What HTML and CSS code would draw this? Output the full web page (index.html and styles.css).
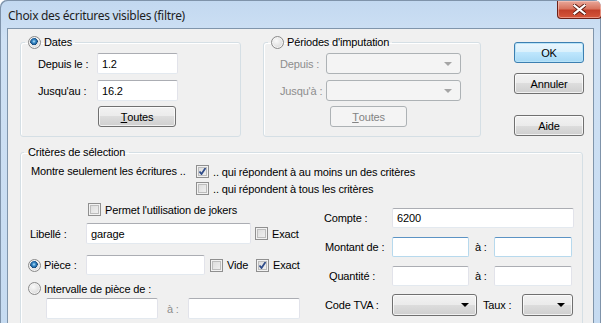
FILE: index.html
```html
<!DOCTYPE html>
<html lang="fr">
<head>
    <meta charset="UTF-8">
    <title>Choix des écritures visibles (filtre)</title>
    <link rel="stylesheet" href="styles.css">
</head>
<body>
    <div class="window">
        <div class="titlebar">
            <span class="title">Choix des écritures visibles (filtre)</span>
            <span class="close">
                <svg width="13" height="11" viewBox="0 0 13 11">
                    <path d="M1.5 1.5 L11.5 9.5 M11.5 1.5 L1.5 9.5" stroke="#5a1a10" stroke-width="4" stroke-linecap="square" fill="none"/>
                    <path d="M1.5 1.5 L11.5 9.5 M11.5 1.5 L1.5 9.5" stroke="#fff" stroke-width="2.2" stroke-linecap="square" fill="none"/>
                </svg>
            </span>
        </div>
        <div class="client">
            <div class="top-row">
                <fieldset class="group dates">
                    <legend><span class="radio on"></span>Dates</legend>
                    <div class="inner">
                        <div class="row">
                            <span class="lbl w-dates">Depuis le :</span>
                            <span class="edit w81">1.2</span>
                        </div>
                        <div class="row">
                            <span class="lbl w-dates">Jusqu'au :</span>
                            <span class="edit w81">16.2</span>
                        </div>
                        <div class="row btn-row">
                            <span class="btn toutes"><u>T</u>outes</span>
                        </div>
                    </div>
                </fieldset>

                <fieldset class="group periods">
                    <legend><span class="radio"></span>Périodes d'imputation</legend>
                    <div class="inner">
                        <div class="row">
                            <span class="lbl dis w-per">Depuis :</span>
                            <span class="combo dis"><span class="arrow"></span></span>
                        </div>
                        <div class="row">
                            <span class="lbl dis w-per">Jusqu'à :</span>
                            <span class="combo dis"><span class="arrow"></span></span>
                        </div>
                        <div class="row btn-row">
                            <span class="btn dis toutes2"><u>T</u>outes</span>
                        </div>
                    </div>
                </fieldset>

                <div class="actions">
                    <span class="btn default">OK</span>
                    <span class="btn">Annuler</span>
                    <span class="btn aide">Aide</span>
                </div>
            </div>

            <fieldset class="group criteria">
                <legend>Critères de sélection</legend>
                <div class="show-row">
                    <span class="show-lbl">Montre seulement les écritures ..</span>
                    <div class="show-opts">
                        <div class="check-line"><span class="check on"></span>.. qui répondent à au moins un des critères</div>
                        <div class="check-line"><span class="check"></span>.. qui répondent à tous les critères</div>
                    </div>
                </div>
                <div class="cols">
                    <div class="col-left">
                        <div class="check-line jokers"><span class="check"></span>Permet l'utilisation de jokers</div>
                        <div class="row libelle">
                            <span class="lbl w-lib">Libellé :</span>
                            <span class="edit w165">garage</span>
                            <span class="check-line"><span class="check"></span>Exact</span>
                        </div>
                        <div class="row piece">
                            <span class="radio-line w-piece"><span class="radio on"></span>Pièce :</span>
                            <span class="edit w119 h20"></span>
                            <span class="check-line vide"><span class="check"></span>Vide</span>
                            <span class="check-line"><span class="check on"></span>Exact</span>
                        </div>
                        <div class="radio-line interv"><span class="radio"></span>Intervalle de pièce de :</div>
                        <div class="row range">
                            <span class="edit w112"></span>
                            <span class="lbl dis a-lbl">à :</span>
                            <span class="edit w112"></span>
                        </div>
                    </div>
                    <div class="col-right">
                        <div class="row r20">
                            <span class="lbl w-right">Compte :</span>
                            <span class="edit w182 h20">6200</span>
                        </div>
                        <div class="row r20 mt9">
                            <span class="lbl w-right pl1">Montant de :</span>
                            <span class="edit hot w77 h20"></span>
                            <span class="lbl a-small">à :</span>
                            <span class="edit hot w78 h20"></span>
                        </div>
                        <div class="row r20 mt9">
                            <span class="lbl w-right pl5">Quantité :</span>
                            <span class="edit w77 h20"></span>
                            <span class="lbl a-small">à :</span>
                            <span class="edit w78 h20"></span>
                        </div>
                        <div class="row mt8">
                            <span class="lbl w-right pl1">Code TVA :</span>
                            <span class="dropbtn w85"><span class="arrow"></span></span>
                            <span class="lbl taux">Taux :</span>
                            <span class="dropbtn w51"><span class="arrow"></span></span>
                        </div>
                    </div>
                </div>
            </fieldset>
        </div>
    </div>
</body>
</html>
```

FILE: styles.css
```css
body {
    margin: 0;
    padding: 0;
    background: #fff;
}
.window {
    width: 601px;
    height: 323px;
    overflow: hidden;
    box-sizing: border-box;
    padding: 0 7px;
    background: linear-gradient(#c2d8f0, #cfe1f4 40px, #c6dbf1);
    border-top-left-radius: 7px;
    border-top-right-radius: 7px;
    box-shadow: inset 1px 1px 0 #7f93aa, inset -1px 0 0 #7f93aa;
    font-family: "Liberation Sans", Arial, sans-serif;
    font-size: 11px;
    letter-spacing: -0.15px;
    color: #000;
}
.titlebar {
    height: 28px;
    display: flex;
    align-items: flex-start;
    justify-content: space-between;
}
.title {
    font-family: "Noto Sans", "Liberation Sans", sans-serif;
    font-size: 12px;
    margin: 7px 0 0 1px;
    letter-spacing: -0.3px;
    color: #1e1e1e;
}
.close {
    width: 45px;
    height: 18px;
    margin: 1px -8px 0 0;
    box-sizing: border-box;
    border: 1px solid #6b2017;
    border-top: none;
    border-radius: 0 0 4px 4px;
    background: linear-gradient(#e9a89a, #d8745f 45%, #c2402a 55%, #d6573c);
    box-shadow: inset 0 0 0 1px rgba(255, 210, 200, 0.5);
    display: flex;
    align-items: center;
    justify-content: center;
}
.client {
    height: 295px;
    box-sizing: border-box;
    border: 1px solid #8095ab;
    border-bottom: none;
    background: #f0f0f0;
    padding: 0 0 0 12px;
}

/* group boxes */
.group {
    margin: 0;
    padding: 0;
    border: 1px solid #d5dfe5;
    border-radius: 3px;
    box-shadow: inset 1px 1px 0 #fff;
    min-width: 0;
}
.group legend {
    margin-left: 4px;
    padding: 0 3px;
    height: 13px;
    line-height: 13px;
    display: flex;
    align-items: center;
}
.group legend .radio {
    margin-right: 3px;
}
.top-row {
    display: flex;
    align-items: flex-start;
    margin-top: 7px;
}
.dates {
    width: 221px;
    height: 101px;
    box-sizing: border-box;
}
.dates .inner {
    padding-left: 17px;
}
.periods {
    width: 218px;
    height: 101px;
    box-sizing: border-box;
    margin-left: 22px;
}
.periods .inner {
    padding-left: 16px;
}
.inner .row:first-child {
    margin-top: 4px;
}
.inner .row + .row {
    margin-top: 6px;
}
.inner .btn-row {
    margin-top: 5px !important;
}
.actions {
    display: flex;
    flex-direction: column;
    margin-left: 33px;
    margin-top: 6px;
}
.actions .btn {
    width: 70px;
    height: 21px;
}
.actions .btn + .btn {
    margin-top: 10px;
}
.actions .btn.aide {
    margin-top: 21px;
}
.criteria {
    width: 563px;
    height: 200px;
    margin-top: 9px;
    box-sizing: border-box;
}
.criteria legend {
    margin-left: 3px;
    padding: 0 4px 0 4px;
}

/* rows and labels */
.row {
    display: flex;
    align-items: center;
}
.lbl {
    flex: none;
    white-space: nowrap;
}
.dis {
    color: #8d8d8d;
}
.w-dates { width: 59px; }
.w-per { width: 46px; }
.w-lib { width: 56px; }
.w-right { width: 68px; box-sizing: border-box; }
.pl1 { padding-left: 1px; }
.pl5 { padding-left: 5px; }
.mt8 { margin-top: 8px; }
.mt9 { margin-top: 9px; }

/* controls */
.edit {
    display: flex;
    align-items: center;
    box-sizing: border-box;
    height: 21px;
    padding: 0 4px;
    background: #fff;
    border: 1px solid #e2e3ea;
    border-top-color: #abadb3;
    border-bottom-color: #e3e9ef;
    border-radius: 2px;
    flex: none;
}
.edit.hot {
    border-color: #b7d9ed;
    border-top-color: #5b93c4;
}
.h20 { height: 20px; }
.w81 { width: 81px; }
.w165 { width: 165px; }
.w119 { width: 119px; }
.w112 { width: 112px; }
.w182 { width: 182px; }
.w77 { width: 77px; }
.w78 { width: 78px; }
.w85 { width: 85px; }
.w51 { width: 51px; }

.btn {
    display: flex;
    align-items: center;
    justify-content: center;
    box-sizing: border-box;
    height: 21px;
    border: 1px solid #707070;
    border-radius: 3px;
    background: linear-gradient(#f2f2f2, #ebebeb 50%, #dddddd 50%, #cfcfcf);
    box-shadow: inset 0 0 0 1px rgba(255, 255, 255, 0.7);
}
.btn.default {
    border-color: #3c7fb1;
    background: linear-gradient(#eaf6fd, #d9f0fc 50%, #bee6fd 50%, #a7d9f5);
    box-shadow: inset 0 0 0 1px #b8e3f8;
}
.btn.dis {
    border-color: #adb2b5;
    background: #f4f4f4;
    box-shadow: none;
    color: #838383;
}
.toutes {
    width: 78px;
    margin-left: 60px;
}
.toutes2 {
    width: 77px;
    margin-left: 50px;
}
.combo {
    box-sizing: border-box;
    width: 135px;
    height: 21px;
    border: 1px solid #adb2b5;
    border-radius: 3px;
    background: #f4f4f4;
    display: flex;
    align-items: center;
    justify-content: flex-end;
    padding-right: 8px;
}
.arrow {
    width: 0;
    height: 0;
    border-left: 4px solid transparent;
    border-right: 4px solid transparent;
    border-top: 4px solid #000;
}
.combo.dis .arrow {
    border-top-color: #a5a5a5;
}
.dropbtn {
    box-sizing: border-box;
    height: 22px;
    flex: none;
    border: 1px solid #707070;
    border-radius: 3px;
    background: linear-gradient(#f2f2f2, #ebebeb 50%, #dddddd 50%, #cfcfcf);
    box-shadow: inset 0 0 0 1px rgba(255, 255, 255, 0.7);
    display: flex;
    align-items: center;
    justify-content: flex-end;
    padding-right: 7px;
}

.check {
    display: inline-block;
    flex: none;
    width: 13px;
    height: 13px;
    box-sizing: border-box;
    border: 1px solid #8f8f8f;
    background: linear-gradient(135deg, #d9d9d9, #f4f4f4);
    box-shadow: inset 0 0 0 1px #f2f2f2, inset 0 0 0 2px #bdbdbd;
    margin-right: 4px;
}
.check.on {
    background:
        url("data:image/svg+xml,%3Csvg xmlns='http://www.w3.org/2000/svg' width='11' height='11'%3E%3Cpath d='M2.5 5.5 L4.5 8 L8.5 2' stroke='%23304d8a' stroke-width='1.8' fill='none'/%3E%3C/svg%3E") center/11px 11px no-repeat,
        linear-gradient(135deg, #d9d9d9, #f4f4f4);
}
.radio {
    display: inline-block;
    flex: none;
    width: 13px;
    height: 13px;
    box-sizing: border-box;
    border-radius: 50%;
    border: 1px solid #8a8a8a;
    background: radial-gradient(circle at 40% 35%, #fafafa, #dcdcdc 70%, #cfcfcf);
    box-shadow: inset 0 0 0 1px #f4f4f4;
}
.radio.on {
    background:
        radial-gradient(circle at 45% 40%, #bfe6fb 0, #3d8ec9 1.6px, #1d5f9b 3px, #16406a 3.6px, transparent 3.8px),
        radial-gradient(circle at 40% 35%, #fafafa, #dcdcdc 70%, #cfcfcf);
}
.check-line {
    display: flex;
    align-items: center;
    height: 13px;
    white-space: nowrap;
}
.radio-line {
    display: flex;
    align-items: center;
    height: 13px;
    white-space: nowrap;
}
.radio-line .radio {
    margin-right: 3px;
}

/* criteria layout */
.show-row {
    display: flex;
    margin-top: 6px;
}
.show-lbl {
    width: 165px;
    margin-left: 10px;
    line-height: 13px;
    white-space: nowrap;
}
.show-opts .check-line + .check-line {
    margin-top: 4px;
}
.cols {
    display: flex;
    align-items: flex-start;
    margin-top: 8px;
}
.col-left {
    width: 303px;
    flex: none;
}
.jokers {
    margin-left: 67px;
}
.libelle {
    margin-top: 7px;
    padding-left: 9px;
}
.libelle .check-line {
    margin-left: 4px;
}
.piece {
    margin-top: 11px;
    height: 20px;
    padding-left: 7px;
}
.w-piece {
    width: 58px;
}
.piece .vide {
    width: 46px;
    margin-left: 5px;
}
.interv {
    margin-top: 7px;
    padding-left: 7px;
}
.range {
    margin-top: 3px;
    padding-left: 25px;
}
.a-lbl {
    width: 30px;
    box-sizing: border-box;
    padding-left: 9px;
}
.col-right {
    margin-top: 5px;
}
.r20 {
    height: 20px;
}
.a-small {
    width: 25px;
    box-sizing: border-box;
    padding-left: 6px;
}
.taux {
    width: 45px;
    box-sizing: border-box;
    padding-left: 6px;
}
```
